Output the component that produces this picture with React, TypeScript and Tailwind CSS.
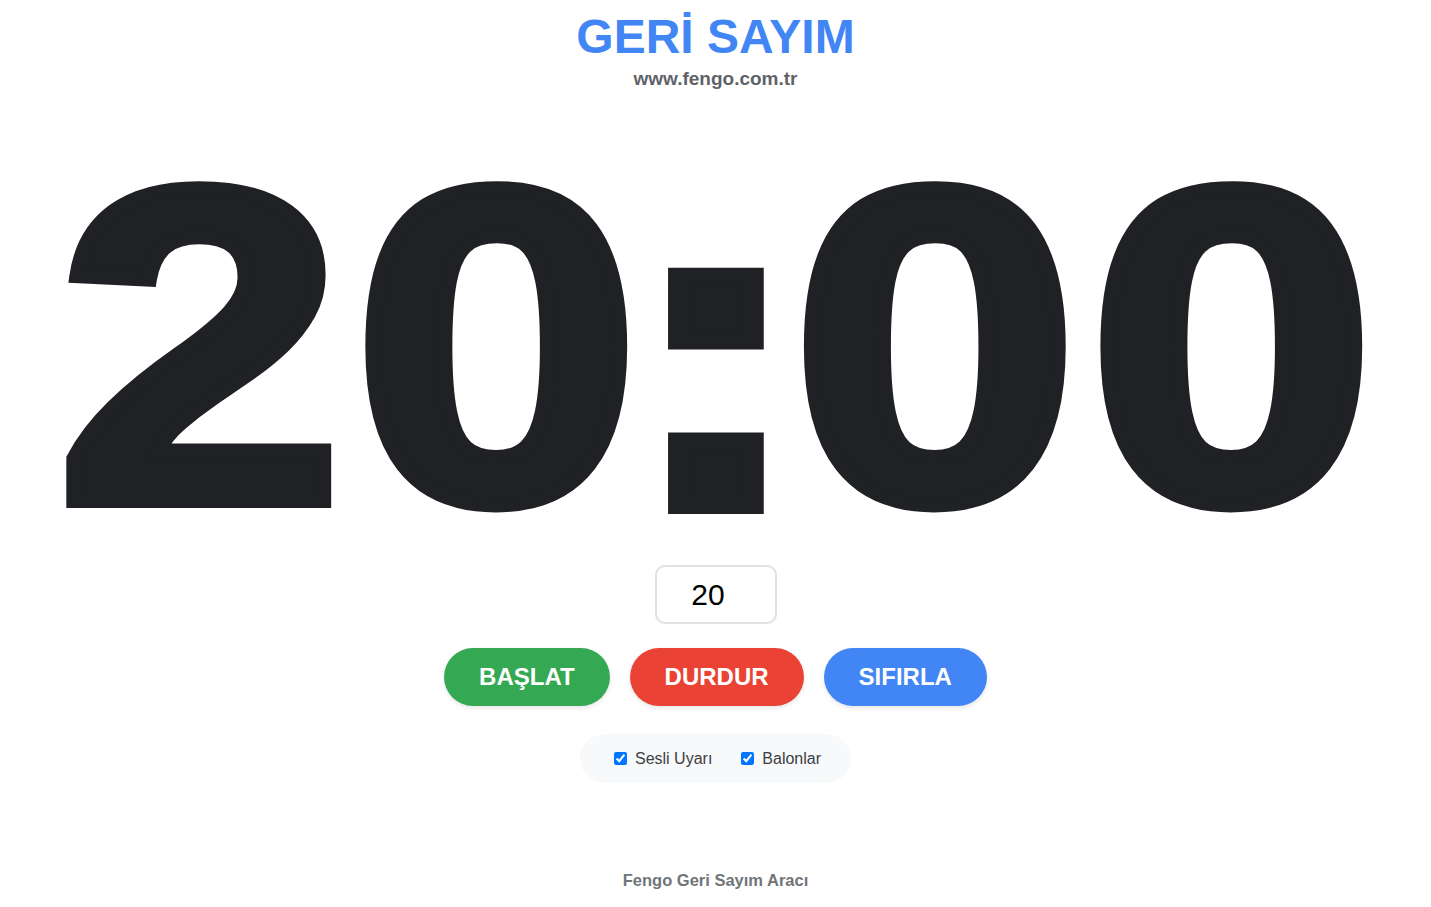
import React, { useState } from "react";

export default function App() {
  const [minutes, setMinutes] = useState("20");
  const [sound, setSound] = useState(true);
  const [balloons, setBalloons] = useState(true);

  return (
    <div className="min-h-screen bg-white flex flex-col items-center font-['Liberation_Sans',Arial,sans-serif] overflow-hidden">
      <h1 className="pt-[9px] text-[48px] leading-[56px] font-bold text-[#4285f4]">GERİ SAYIM</h1>
      <div className="mt-[3px] text-[19px] leading-[22px] font-bold text-[#5f6368]">www.fengo.com.tr</div>

      {/* big clock readout */}
      <div className="mt-[42px] flex h-[428px] leading-[428px] text-[448px] font-bold text-[#202124] [-webkit-text-stroke:14px_#202124] scale-x-[1.153]">
        <span className="mx-[4px]">2</span>
        <span className="mx-[4px]">0</span>
        <span className="-mx-[13px] inline-block translate-y-[3px] [-webkit-text-stroke:20px_#202124]">:</span>
        <span className="mx-[4px]">0</span>
        <span className="mx-[4px]">0</span>
      </div>

      <input
        type="number"
        value={minutes}
        onChange={(e) => setMinutes(e.target.value)}
        className="mt-[5px] w-[122px] h-[59px] px-[10px] border-2 border-[#dfe1e5] rounded-[10px] text-[30px] text-center text-black outline-none"
      />

      <div className="mt-[24px] flex gap-[20px]">
        <button className="px-[35px] py-[15px] rounded-full bg-[#34a853] text-white text-[24px] leading-[28px] font-bold shadow-[0_2px_5px_rgba(0,0,0,0.1)]">
          BAŞLAT
        </button>
        <button className="px-[35px] py-[15px] rounded-full bg-[#ea4335] text-white text-[24px] leading-[28px] font-bold shadow-[0_2px_5px_rgba(0,0,0,0.1)]">
          DURDUR
        </button>
        <button className="px-[35px] py-[15px] rounded-full bg-[#4285f4] text-white text-[24px] leading-[28px] font-bold shadow-[0_2px_5px_rgba(0,0,0,0.1)]">
          SIFIRLA
        </button>
      </div>

      <div className="mt-[28px] flex items-center gap-[25px] bg-[#f8f9fa] rounded-full px-[30px] py-[15px] text-[16px] leading-[19px] text-[#3c4043]">
        <label className="flex items-center">
          <input
            type="checkbox"
            checked={sound}
            onChange={(e) => setSound(e.target.checked)}
            className="w-[13px] h-[13px] ml-[4px] mr-[8px]"
          />
          Sesli Uyarı
        </label>
        <label className="flex items-center">
          <input
            type="checkbox"
            checked={balloons}
            onChange={(e) => setBalloons(e.target.checked)}
            className="w-[13px] h-[13px] ml-[4px] mr-[8px]"
          />
          Balonlar
        </label>
      </div>

      <footer className="mt-[88px] text-[16.5px] leading-[19px] font-bold text-[#70757a]">Fengo Geri Sayım Aracı</footer>
    </div>
  );
}
